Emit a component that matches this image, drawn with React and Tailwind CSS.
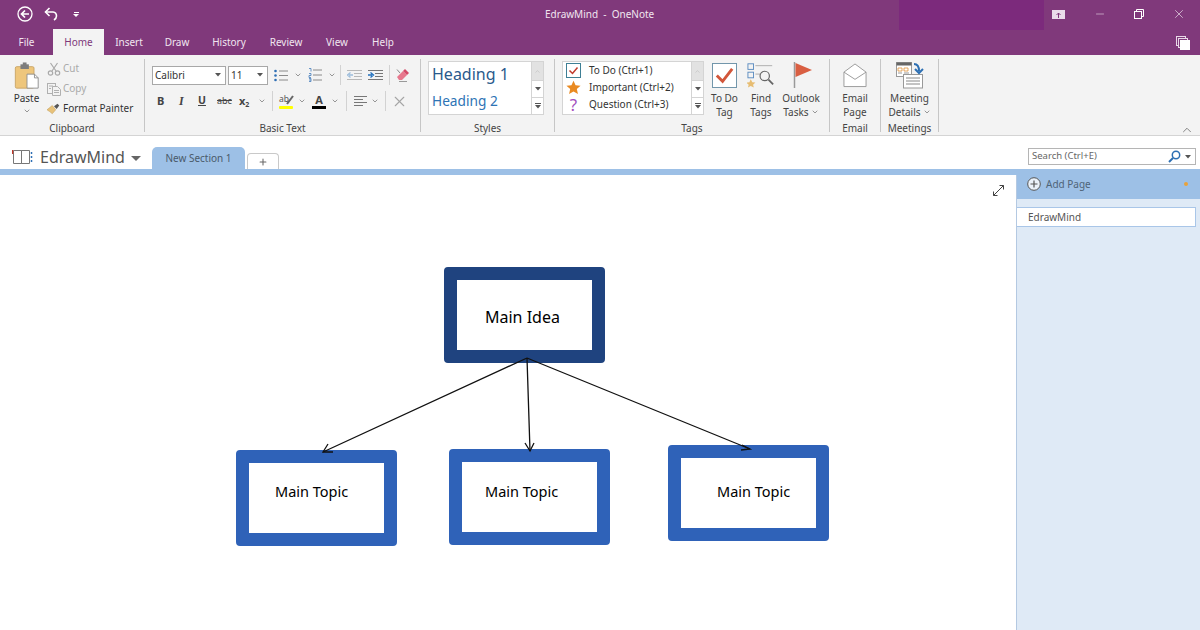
import { ChevronDown, ChevronUp, Plus, X, Minus } from 'lucide-react'

const TABS = [
  { label: 'Insert', w: 'w-[50px]' },
  { label: 'Draw', w: 'w-[46px]' },
  { label: 'History', w: 'w-[58px]' },
  { label: 'Review', w: 'w-[56px]' },
  { label: 'View', w: 'w-[46px]' },
  { label: 'Help', w: 'w-[46px]' },
]

function Chev({ className = 'text-[#666]' }) {
  return <ChevronDown size={8} strokeWidth={2} className={className} />
}

function Sep() {
  return <span className="block h-[20px] w-px bg-[#d2d2d2]" />
}

function Group({ width, label, children }) {
  return (
    <div className={`flex h-full shrink-0 flex-col ${width}`}>
      <div className="relative min-h-0 flex-1">{children}</div>
      <div className="h-[14px] text-center text-[10px] leading-[14px] text-[#444]">{label}</div>
    </div>
  )
}

function GroupSep() {
  return <span className="mt-[1px] h-[73px] w-px shrink-0 bg-[#c6c6c6]" />
}

function GalleryScroll() {
  return (
    <div className="flex w-[12px] shrink-0 flex-col border-l border-[#d4d4d4] text-[#666]">
      <span className="flex h-[18px] items-center justify-center bg-[#e2e2e2]">
        <ChevronUp size={7} className="text-[#bbb]" />
      </span>
      <span className="flex h-[18px] items-center justify-center border-y border-[#d4d4d4]">
        <svg width="6" height="4" viewBox="0 0 6 4"><path d="M0 0h6L3 3.5z" fill="#555" /></svg>
      </span>
      <span className="flex flex-1 flex-col items-center justify-center gap-px">
        <span className="h-px w-[6px] bg-[#555]" />
        <svg width="6" height="4" viewBox="0 0 6 4"><path d="M0 0h6L3 3.5z" fill="#555" /></svg>
      </span>
    </div>
  )
}

function PasteIcon() {
  return (
    <svg width="26" height="28" viewBox="0 0 26 30">
      <rect x="0.5" y="5" width="20" height="23" rx="1.5" fill="#eec67c" stroke="#c9a566" />
      <rect x="6" y="2.5" width="9" height="5" fill="#7d7d7d" />
      <rect x="8.5" y="0.5" width="4" height="3" fill="#7d7d7d" />
      <path d="M13 13h8l4 4v11H13z" fill="#fff" stroke="#8f8f8f" />
      <path d="M21 13v4h4" fill="none" stroke="#8f8f8f" />
    </svg>
  )
}

function CutIcon() {
  return (
    <svg width="14" height="14" viewBox="0 0 14 14" fill="none" stroke="#a9a9a9" strokeWidth="1.2">
      <circle cx="3.5" cy="11" r="2.2" />
      <circle cx="10.5" cy="11" r="2.2" />
      <path d="M5 9 10.5 1M9 9 3.5 1" />
    </svg>
  )
}

function CopyIcon() {
  return (
    <svg width="14" height="14" viewBox="0 0 14 14" fill="none" stroke="#b0b0b0">
      <rect x="0.5" y="1.5" width="8" height="10" fill="#f3f3f3" />
      <path d="M5.5 4.5h5l3 3v6h-8z" fill="#f3f3f3" />
      <path d="M2 4h4M2 6.5h2M7 8.5h5M7 10.5h5" />
    </svg>
  )
}

function PainterIcon() {
  return (
    <svg width="14" height="13" viewBox="0 0 16 13">
      <path d="M0 8 6 3l4 5-4 4.5C4 10.5 2 9.5 0 8z" fill="#e8c27a" stroke="#b8924c" strokeWidth="0.5" />
      <path d="m8 4 4-3 2 2-3 4z" fill="#555" />
    </svg>
  )
}

function BulletIcon() {
  return (
    <svg width="14" height="13" viewBox="0 0 14 13">
      <g fill="#2f6fb5">
        <circle cx="1.5" cy="2" r="1.3" />
        <circle cx="1.5" cy="6.5" r="1.3" />
        <circle cx="1.5" cy="11" r="1.3" />
      </g>
      <path d="M5 2h9M5 6.5h9M5 11h9" stroke="#8a8a8a" />
    </svg>
  )
}

function NumberIcon() {
  return (
    <svg width="14" height="14" viewBox="0 0 14 14">
      <path d="M1 .5h2v3M1 5.5h2v2H1v2h2M1 10.5h2v3H1M1 12h2" fill="none" stroke="#2f6fb5" strokeWidth="0.7" />
      <path d="M5 2h9M5 7h9M5 12h9" stroke="#8a8a8a" />
    </svg>
  )
}

function IndentIcon({ right }) {
  return (
    <svg width="15" height="12" viewBox="0 0 15 12">
      <path d="M0 1.5h15M7 4.5h8M7 7.5h8M0 10.5h15" stroke={right ? '#777' : '#b8b8b8'} />
      <path d={right ? 'M0 6h4M2.5 3.5 5.5 6l-3 2.5' : 'M6 6H2M3.5 3.5.5 6l3 2.5'} fill="none" stroke={right ? '#1f6fbd' : '#9dbddc'} strokeWidth="1.3" />
    </svg>
  )
}

function EraserIcon() {
  return (
    <svg width="15" height="15" viewBox="0 0 15 15">
      <path d="m1 9 6-6 4 4-5 5H3z" fill="#e7788d" />
      <path d="m7 3 2-2 4 4-2 2z" fill="#d44a68" />
      <path d="M1 1.5 4 5" stroke="#888" />
      <path d="M3 13.5h8" stroke="#999" />
    </svg>
  )
}

function AlignIcon() {
  return (
    <svg width="13" height="10" viewBox="0 0 13 10">
      <path d="M0 .5h13M0 3.5h9M0 6.5h13M0 9.5h9" stroke="#777" />
    </svg>
  )
}

function CheckBoxSmall() {
  return (
    <svg width="15" height="15" viewBox="0 0 15 15">
      <rect x="0.5" y="0.5" width="14" height="14" fill="#fff" stroke="#3e7f95" />
      <path d="m3.5 7.5 3 3 5-6" fill="none" stroke="#c0392b" strokeWidth="1.5" />
    </svg>
  )
}

function StarIcon({ size = 15, color = '#e98a22' }) {
  return (
    <svg width={size} height={size} viewBox="0 0 24 24">
      <path d="m12 1 3.3 7.4 8 .8-6 5.3 1.8 7.9L12 18.3 4.9 22.4l1.8-7.9-6-5.3 8-.8z" fill={color} />
    </svg>
  )
}

function ToDoTagIcon() {
  return (
    <svg width="25" height="25" viewBox="0 0 26 26">
      <rect x="0.5" y="0.5" width="25" height="25" fill="#fff" stroke="#6d93a8" />
      <path d="m5 13 6 6 10-13" fill="none" stroke="#d2563a" strokeWidth="3" />
    </svg>
  )
}

function FindTagsIcon() {
  return (
    <svg width="28" height="26" viewBox="0 0 30 26" fill="none">
      <rect x="1" y="1" width="6" height="6" stroke="#5b8cc0" />
      <rect x="1" y="10" width="6" height="6" stroke="#5b8cc0" />
      <path d="M9 3h18M9 12h5" stroke="#aaa" />
      <circle cx="19" cy="14" r="5" stroke="#666" strokeWidth="1.3" />
      <path d="m23 18 5 5" stroke="#666" strokeWidth="2" />
      <path d="m4 17.5 1.7 3.3 3.3.3-2.5 2.3.8 3.1L4 24.8 1 26.5l.8-3.1L-.7 21.1l3.3-.3z" fill="#e7bd72" />
    </svg>
  )
}

function FlagIcon() {
  return (
    <svg width="20" height="26" viewBox="0 0 20 26">
      <path d="M1.5 0v26" stroke="#999" strokeWidth="1.5" />
      <path d="M2.5 1 19 8 2.5 15z" fill="#d95f42" />
    </svg>
  )
}

function EmailIcon() {
  return (
    <svg width="26" height="25" viewBox="0 0 26 26" fill="#fff" stroke="#9a9a9a">
      <path d="M1.5 9.5 13 1l11.5 8.5v15h-23z" />
      <path d="M1.5 9.5 13 17l11.5-7.5" />
    </svg>
  )
}

function MeetingIcon() {
  return (
    <svg width="28" height="27" viewBox="0 0 28 27">
      <rect x="0.5" y="0.5" width="15" height="14" fill="#fff" stroke="#999" />
      <rect x="0.5" y="0.5" width="15" height="3" fill="#666" />
      <path d="M2 6h4v3H2zM8 6h4v3H8z" fill="none" stroke="#e0923a" strokeWidth="0.8" />
      <path d="M2 11h4M8 11h5" stroke="#999" />
      <rect x="7.5" y="12.5" width="19" height="13.5" fill="#fff" stroke="#999" />
      <path d="M10 16h14M10 19h14M10 22h14" stroke="#888" />
      <path d="M18 2c4 0 5 3 5 7" fill="none" stroke="#2c6fb3" strokeWidth="2" />
      <path d="m19 7 4 4 4-4" fill="none" stroke="#2c6fb3" strokeWidth="2" />
    </svg>
  )
}

function NotebookIcon() {
  return (
    <svg width="21" height="16" viewBox="0 0 21 16" fill="none">
      <path d="M1.5 1.5h8v13h-8zM9.5 1.5h8v13h-8z" stroke="#777" />
      <path d="M.5 1v4" stroke="#c0392b" strokeWidth="1.5" />
      <path d="M19.5 3v2M19.5 7v2M19.5 11v2" stroke="#2f6fb5" strokeWidth="1.5" />
    </svg>
  )
}

function TagRow({ icon, label }) {
  return (
    <div className="flex h-[17px] items-center">
      <span className="flex w-[21px] shrink-0 justify-center">{icon}</span>
      <span className="ml-[5px] text-[10px] text-[#333]">{label}</span>
    </div>
  )
}

function BigButton({ width, icon, children }) {
  return (
    <div className={`flex shrink-0 flex-col items-center ${width}`}>
      <div className="flex h-[28px] items-center justify-center">{icon}</div>
      <div className="mt-[2px] text-center text-[10px] leading-[14px] text-[#444]">{children}</div>
    </div>
  )
}

function Ribbon() {
  return (
    <div className="flex h-[81px] shrink-0 border-b border-[#d4d4d4] bg-[#f3f3f3] pt-[3px]">
      <Group width="w-[144px]" label="Clipboard">
        <div className="flex pl-[13px] pt-[4px]">
          <div className="flex w-[27px] flex-col items-center">
            <PasteIcon />
            <span className="mt-[1px] text-[10px] leading-[14px] text-[#333]">Paste</span>
            <span className="mt-[2px]"><Chev /></span>
          </div>
          <div className="-mt-[1px] ml-[7px] flex flex-col gap-[5px] text-[10px] leading-[15px]">
            <div className="flex items-center gap-[2px] text-[#aaa]"><CutIcon />Cut</div>
            <div className="flex items-center gap-[2px] text-[#aaa]"><CopyIcon />Copy</div>
            <div className="flex items-center gap-[2px] text-[#333]"><PainterIcon />Format Painter</div>
          </div>
        </div>
      </Group>
      <GroupSep />
      <Group width="w-[275px]" label="Basic Text">
        <div className="mt-[7px] flex h-[20px] items-center pl-[7px]">
          <div className="flex h-[19px] w-[74px] items-center justify-between border border-[#a8a8a8] bg-white px-[2px] text-[10px] text-[#333]">
            Calibri
            <svg className="mr-[2px]" width="6" height="4" viewBox="0 0 6 4"><path d="M0 0h6L3 3.5z" fill="#555" /></svg>
          </div>
          <div className="ml-[2px] flex h-[19px] w-[40px] items-center justify-between border border-[#a8a8a8] bg-white px-[2px] text-[10px] text-[#333]">
            11
            <svg className="mr-[2px]" width="6" height="4" viewBox="0 0 6 4"><path d="M0 0h6L3 3.5z" fill="#555" /></svg>
          </div>
          <div className="ml-[6px] flex w-[32px] items-center gap-[6px]"><BulletIcon /><Chev /></div>
          <div className="ml-[2px] flex w-[32px] items-center gap-[6px]"><NumberIcon /><Chev /></div>
          <Sep />
          <div className="ml-[6px] flex items-center gap-[6px]"><IndentIcon /><IndentIcon right /></div>
          <span className="ml-[6px]"><Sep /></span>
          <span className="ml-[6px]"><EraserIcon /></span>
        </div>
        <div className="mt-[5px] flex h-[22px] items-center pl-[12px]">
          <span className="w-[22px] text-[11px] font-bold text-[#444]">B</span>
          <span className="w-[19px] font-['Liberation_Serif',serif] text-[12px] font-bold italic text-[#444]">I</span>
          <span className="w-[19px] text-[10.5px] font-bold text-[#444] underline">U</span>
          <span className="w-[22px] text-[9px] text-[#444] line-through">abc</span>
          <span className="w-[19px] text-[11px] font-bold text-[#444]">x<sub className="text-[7px]">2</sub></span>
          <Chev />
          <span className="ml-[6px]"><Sep /></span>
          <div className="relative ml-[6px] flex w-[14px] flex-col items-center">
            <span className="h-[11px] self-start text-[8.5px] leading-[10px] text-[#555]">ab</span>
            <svg className="absolute right-[-1px] top-[1px]" width="8" height="10" viewBox="0 0 8 10"><path d="M1 9 7 1" stroke="#666" strokeWidth="2" /></svg>
            <span className="mt-[1px] h-[3px] w-[14px] rounded-[1px] bg-[#ffff00]" />
          </div>
          <span className="ml-[5px]"><Chev /></span>
          <div className="ml-[6px] flex w-[14px] flex-col items-center">
            <span className="h-[11px] text-[11px] font-bold leading-[11px] text-[#444]">A</span>
            <span className="mt-[1px] h-[3px] w-[14px] bg-black" />
          </div>
          <span className="ml-[5px]"><Chev /></span>
          <span className="ml-[7px]"><Sep /></span>
          <span className="ml-[7px]"><AlignIcon /></span>
          <span className="ml-[4px]"><Chev /></span>
          <span className="ml-[6px]"><Sep /></span>
          <X size={17} strokeWidth={1.5} className="ml-[5px] text-[#a5a5a5]" />
        </div>
      </Group>
      <GroupSep />
      <Group width="w-[133px]" label="Styles">
        <div className="ml-[7px] mt-[3px] flex h-[54px] w-[116px] border border-[#d4d4d4] bg-white">
          <div className="flex-1 pl-[3px]">
            <div className="h-[28px] text-[16px] leading-[25px] text-[#2a5a8c]">Heading 1</div>
            <div className="text-[13.7px] leading-[22px] text-[#2e74b5]">Heading 2</div>
          </div>
          <GalleryScroll />
        </div>
      </Group>
      <GroupSep />
      <Group width="w-[274px]" label="Tags">
        <div className="flex pl-[7px] pt-[3px]">
          <div className="flex h-[54px] w-[142px] shrink-0 border border-[#d4d4d4] bg-white">
            <div className="flex-1">
              <TagRow icon={<CheckBoxSmall />} label="To Do (Ctrl+1)" />
              <TagRow icon={<StarIcon />} label="Important (Ctrl+2)" />
              <TagRow icon={<span className="text-[17px] leading-[17px] text-[#a24fc0]">?</span>} label="Question (Ctrl+3)" />
            </div>
            <GalleryScroll />
          </div>
          <BigButton width="ml-[2px] w-[37px]" icon={<ToDoTagIcon />}>To Do<br />Tag</BigButton>
          <BigButton width="w-[36px]" icon={<FindTagsIcon />}>Find<br />Tags</BigButton>
          <BigButton width="w-[44px]" icon={<span className="ml-[4px] block"><FlagIcon /></span>}>
            Outlook<br />
            <span className="inline-flex items-center gap-[2px]">Tasks <Chev /></span>
          </BigButton>
        </div>
      </Group>
      <GroupSep />
      <Group width="w-[50px]" label="Email">
        <div className="pt-[3px]">
          <BigButton width="w-full" icon={<EmailIcon />}>Email<br />Page</BigButton>
        </div>
      </Group>
      <GroupSep />
      <Group width="w-[57px]" label="Meetings">
        <div className="pt-[3px]">
          <BigButton width="w-full" icon={<MeetingIcon />}>
            Meeting<br />
            <span className="inline-flex items-center gap-[2px]">Details <Chev /></span>
          </BigButton>
        </div>
      </Group>
      <GroupSep />
      <div className="flex flex-1 items-end justify-end pr-[6px]">
        <ChevronUp size={14} strokeWidth={1.2} className="-mb-[2px] text-[#555]" />
      </div>
    </div>
  )
}

function TitleBar() {
  return (
    <div className="flex h-[30px] shrink-0 items-start text-white">
      <div className="flex h-[28px] w-[899px] shrink-0 items-center pl-[17px]">
        <svg width="16" height="16" viewBox="0 0 16 16" fill="none" stroke="#fff" strokeWidth="1.3">
          <circle cx="8" cy="8" r="7" />
          <path d="M12 8H4.5M8 4.5 4.5 8 8 11.5" strokeWidth="1.7" />
        </svg>
        <svg className="ml-[11px]" width="15" height="14" viewBox="0 0 15 14" fill="none" stroke="#fff" strokeWidth="1.6">
          <path d="M5.5 1 1.5 5l4 4" />
          <path d="M1.5 5H9a4 4 0 0 1 3.5 4c0 2-1 3-2.5 4" />
        </svg>
        <span className="ml-[14px] flex flex-col items-center gap-[1px]">
          <span className="h-px w-[5px] bg-white" />
          <svg width="6" height="3" viewBox="0 0 6 3"><path d="M0 0h6L3 3z" fill="#fff" /></svg>
        </span>
        <span className="ml-[466px] mt-[1px] whitespace-pre text-[10px] text-[#f1e6f0]">EdrawMind  -  OneNote</span>
      </div>
      <div className="h-[30px] w-[145px] shrink-0 bg-[#7c2a7c]" />
      <div className="flex h-[28px] flex-1 items-center">
        <span className="ml-[8px] flex w-[13px] justify-center">
          <svg width="13" height="9" viewBox="0 0 13 9">
            <rect width="13" height="9" fill="#eadcea" />
            <path d="M6.5 8V3M4.5 5l2-2 2 2" stroke="#80397b" fill="none" />
          </svg>
        </span>
        <Minus size={12} strokeWidth={1} className="ml-[29px]" />
        <svg className="ml-[28px]" width="10" height="10" viewBox="0 0 10 10" fill="none" stroke="#fff">
          <path d="M2.5 2.5v-2h7v7h-2" />
          <rect x="0.5" y="2.5" width="7" height="7" />
        </svg>
        <X size={14} strokeWidth={1} className="ml-[28px]" />
      </div>
    </div>
  )
}

function TabBar() {
  return (
    <div className="flex h-[25px] shrink-0 items-stretch text-[10px] text-[#f1e6f0]">
      <div className="flex w-[53px] items-center justify-center">File</div>
      <div className="-mt-px flex w-[51px] items-center justify-center bg-[#f3f3f3] text-[#80397b]">Home</div>
      {TABS.map((t) => (
        <div key={t.label} className={`flex items-center justify-center ${t.w}`}>{t.label}</div>
      ))}
      <div className="ml-auto flex items-center pr-[10px]">
        <svg width="14" height="14" viewBox="0 0 14 14">
          <rect x="0.5" y="0.5" width="9" height="9" fill="none" stroke="#e8d8e7" />
          <rect x="2.5" y="2.5" width="9" height="9" fill="#80397b" stroke="#e8d8e7" />
          <rect x="4" y="4" width="10" height="10" fill="#fff" />
        </svg>
      </div>
    </div>
  )
}

function SectionBar() {
  return (
    <div className="flex h-[33px] shrink-0 items-end bg-white">
      <div className="flex h-full w-[152px] shrink-0 items-center pl-[12px] pt-[9px]">
        <NotebookIcon />
        <span className="ml-[7px] text-[16px] leading-none text-[#555]">EdrawMind</span>
        <svg className="ml-[6px] mt-[2px]" width="10" height="5" viewBox="0 0 10 5"><path d="M0 0h10L5 5z" fill="#666" /></svg>
      </div>
      <div className="flex h-[22px] w-[93px] items-center justify-center rounded-t-[5px] bg-[#9dc0e6] text-[10px] text-[#4a5a6a]">New Section 1</div>
      <div className="ml-[2px] flex h-[16px] w-[32px] items-center justify-center rounded-t-[4px] border border-b-0 border-[#c9c9c9]">
        <Plus size={10} strokeWidth={2.5} className="text-[#666]" />
      </div>
      <div className="mb-[4px] ml-auto mr-[4px] flex h-[17px] w-[168px] items-center border border-[#b5b5b5] px-[3px] text-[9.5px] text-[#666]">
        Search (Ctrl+E)
        <svg className="ml-auto" width="13" height="13" viewBox="0 0 13 13" fill="none" stroke="#2c6fb3" strokeWidth="1.5">
          <circle cx="8" cy="5" r="3.7" />
          <path d="M5 8 1 12" strokeWidth="2" />
        </svg>
        <svg className="ml-[4px] mr-[1px]" width="6" height="4" viewBox="0 0 6 4"><path d="M0 0h6L3 3.5z" fill="#555" /></svg>
      </div>
    </div>
  )
}

function DiagramBox({ className, border, textClass, label }) {
  return (
    <div className={`absolute h-[96px] w-[161px] rounded-[4px] border-[13px] bg-white ${border} ${className}`}>
      <span className={`absolute whitespace-nowrap ${textClass}`}>{label}</span>
    </div>
  )
}

function Canvas() {
  return (
    <div className="relative min-w-0 flex-1 bg-white">
      <svg className="absolute right-[11px] top-[9px]" width="13" height="13" viewBox="0 0 13 13" fill="none" stroke="#444" strokeWidth="1">
        <path d="M1.5 11.5 11.5 1.5M7.5 1.5h4v4M1.5 7.5v4h4" />
      </svg>
      <DiagramBox className="left-[444px] top-[92px]" border="border-[#1f437f]" textClass="left-[28px] top-[25px] text-[16px] text-black" label="Main Idea" />
      <DiagramBox className="left-[236px] top-[275px]" border="border-[#2f62b8]" textClass="left-[26px] top-[18px] text-[14.5px] text-black" label="Main Topic" />
      <DiagramBox className="left-[449px] top-[274px]" border="border-[#2f62b8]" textClass="left-[23px] top-[19px] text-[14.5px] text-black" label="Main Topic" />
      <DiagramBox className="left-[668px] top-[270px]" border="border-[#2f62b8]" textClass="left-[36px] top-[23px] text-[14.5px] text-black" label="Main Topic" />
      {/* connectors sit over the boxes */}
      <svg className="absolute left-0 top-0" width="1016" height="455" fill="none" stroke="#111" strokeWidth="1.3">
        <path d="M527 183 323 277M527 183 530 276M527 183 750 274" />
        <path d="M328 269 323 277 333 277M525 268 530 276 534 268M742 270 750 274 741 275" />
      </svg>
    </div>
  )
}

function PagePanel() {
  return (
    <div className="flex w-[184px] shrink-0 flex-col border-l border-[#b4c9e2] bg-[#dfeaf6]">
      <div className="-mt-[6px] flex h-[30px] shrink-0 items-end bg-[#9dc0e6] pb-[8px] pl-[10px] text-[10px] text-[#4f6477]">
        <svg width="14" height="14" viewBox="0 0 14 14" fill="none" stroke="#555">
          <circle cx="7" cy="7" r="6.3" fill="#eaf1f9" />
          <path d="M7 3.5v7M3.5 7h7" strokeWidth="1.2" />
        </svg>
        <span className="ml-[5px] leading-[14px]">Add Page</span>
        <span className="mb-[5px] ml-auto mr-[12px] h-[4px] w-[4px] rounded-full bg-[#e9a23b]" />
      </div>
      <div className="mr-[4px] mt-[8px] flex h-[20px] items-center border border-l-0 border-[#a9c6e8] bg-white pl-[11px] text-[10px] leading-[14px] text-[#555]">EdrawMind</div>
    </div>
  )
}

export default function App() {
  return (
    <div className="flex h-[630px] w-[1200px] flex-col overflow-hidden bg-[#80397b] font-['Noto_Sans',sans-serif]">
      <TitleBar />
      <TabBar />
      <Ribbon />
      <SectionBar />
      <div className="h-[6px] shrink-0 bg-[#9dc0e6]" />
      <div className="flex min-h-0 flex-1">
        <Canvas />
        <PagePanel />
      </div>
    </div>
  )
}
